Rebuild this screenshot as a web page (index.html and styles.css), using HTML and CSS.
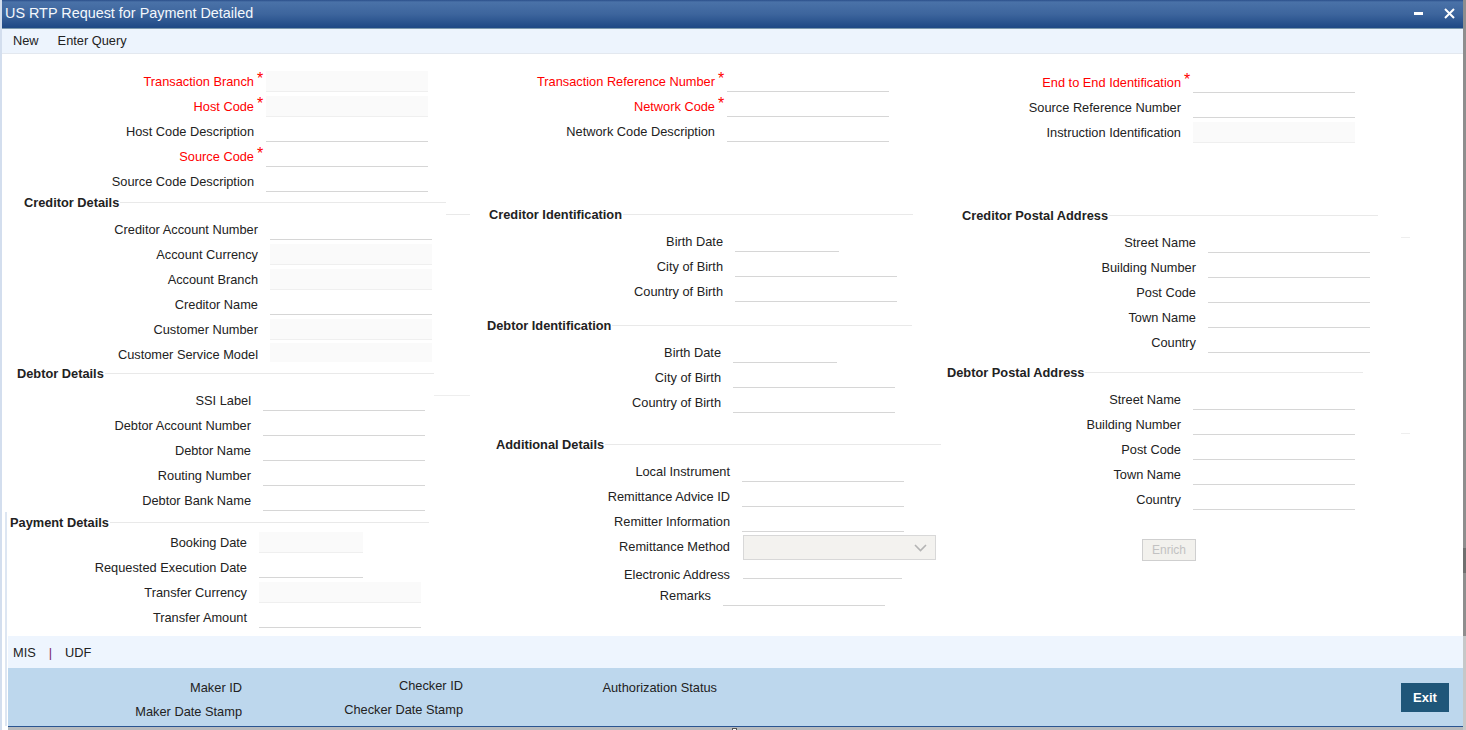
FILE: index.html
```html
<!DOCTYPE html>
<html lang="en">
<head>
<meta charset="utf-8">
<title>US RTP Request for Payment Detailed</title>
<link rel="stylesheet" href="styles.css">
</head>
<body>
<div class="app">
  <div class="edge-left"></div>
  <div class="window">
    <header class="titlebar">
      <h1 class="title">US RTP Request for Payment Detailed</h1>
      <div class="win-ctrl">
        <svg class="ic-min" width="9" height="3" viewBox="0 0 9 3"><rect width="9" height="3" fill="#fff"/></svg>
        <svg class="ic-close" width="11" height="11" viewBox="0 0 11 11"><path d="M1 1l9 9M10 1l-9 9" stroke="#fff" stroke-width="2" fill="none"/></svg>
      </div>
    </header>
    <nav class="menubar"><a>New</a><a>Enter Query</a></nav>

    <main class="form">
      <div class="col col-1">
        <section class="sec s-a">
          <div class="row req"><label class="lab">Transaction Branch</label><span class="star">*</span><input class="inp ro" readonly></div>
          <div class="row req"><label class="lab">Host Code</label><span class="star">*</span><input class="inp ro" readonly></div>
          <div class="row"><label class="lab">Host Code Description</label><span class="star"></span><input class="inp"></div>
          <div class="row req"><label class="lab">Source Code</label><span class="star">*</span><input class="inp"></div>
          <div class="row"><label class="lab">Source Code Description</label><span class="star"></span><input class="inp"></div>
        </section>
        <section class="sec s-cred">
          <h2 class="head h-cred"><span>Creditor Details</span></h2>
          <div class="row"><label class="lab">Creditor Account Number</label><span class="star"></span><input class="inp"></div>
          <div class="row"><label class="lab">Account Currency</label><span class="star"></span><input class="inp ro" readonly></div>
          <div class="row"><label class="lab">Account Branch</label><span class="star"></span><input class="inp ro" readonly></div>
          <div class="row"><label class="lab">Creditor Name</label><span class="star"></span><input class="inp"></div>
          <div class="row"><label class="lab">Customer Number</label><span class="star"></span><input class="inp ro" readonly></div>
          <div class="row"><label class="lab">Customer Service Model</label><span class="star"></span><input class="inp ro clipped" readonly></div>
        </section>
        <section class="sec s-deb">
          <h2 class="head h-deb"><span>Debtor Details</span></h2>
          <div class="row"><label class="lab">SSI Label</label><span class="star"></span><input class="inp"></div>
          <div class="row"><label class="lab">Debtor Account Number</label><span class="star"></span><input class="inp"></div>
          <div class="row"><label class="lab">Debtor Name</label><span class="star"></span><input class="inp"></div>
          <div class="row"><label class="lab">Routing Number</label><span class="star"></span><input class="inp"></div>
          <div class="row"><label class="lab">Debtor Bank Name</label><span class="star"></span><input class="inp"></div>
        </section>
        <section class="sec s-pay">
          <h2 class="head h-pay"><span>Payment Details</span></h2>
          <div class="row"><label class="lab">Booking Date</label><span class="star"></span><input class="inp date ro" readonly></div>
          <div class="row"><label class="lab">Requested Execution Date</label><span class="star"></span><input class="inp date"></div>
          <div class="row"><label class="lab">Transfer Currency</label><span class="star"></span><input class="inp ro" readonly></div>
          <div class="row"><label class="lab">Transfer Amount</label><span class="star"></span><input class="inp"></div>
        </section>
      </div>

      <div class="col col-2">
        <section class="sec s-ref">
          <div class="row req"><label class="lab">Transaction Reference Number</label><span class="star">*</span><input class="inp"></div>
          <div class="row req"><label class="lab">Network Code</label><span class="star">*</span><input class="inp"></div>
          <div class="row"><label class="lab">Network Code Description</label><span class="star"></span><input class="inp"></div>
        </section>
        <section class="sec s-ci">
          <h2 class="head h-ci"><span>Creditor Identification</span></h2>
          <div class="row"><label class="lab">Birth Date</label><span class="star"></span><input class="inp date"></div>
          <div class="row"><label class="lab">City of Birth</label><span class="star"></span><input class="inp"></div>
          <div class="row"><label class="lab">Country of Birth</label><span class="star"></span><input class="inp"></div>
        </section>
        <section class="sec s-di">
          <h2 class="head h-di"><span>Debtor Identification</span></h2>
          <div class="row"><label class="lab">Birth Date</label><span class="star"></span><input class="inp date"></div>
          <div class="row"><label class="lab">City of Birth</label><span class="star"></span><input class="inp"></div>
          <div class="row"><label class="lab">Country of Birth</label><span class="star"></span><input class="inp"></div>
        </section>
        <section class="sec s-add">
          <h2 class="head h-add"><span>Additional Details</span></h2>
          <div class="row"><label class="lab">Local Instrument</label><span class="star"></span><input class="inp"></div>
          <div class="row"><label class="lab">Remittance Advice ID</label><span class="star"></span><input class="inp"></div>
          <div class="row"><label class="lab">Remitter Information</label><span class="star"></span><input class="inp"></div>
          <div class="row row-select"><label class="lab">Remittance Method</label><span class="star"></span>
            <div class="select"><svg width="13" height="8" viewBox="0 0 13 8"><path d="M1 1l5.500 5.500L12 1" stroke="#b4b4b4" stroke-width="1.600" fill="none"/></svg></div>
          </div>
          <div class="row row-email"><label class="lab">Electronic Address</label><span class="star"></span><input class="inp"></div>
          <div class="row row-remarks"><label class="lab">Remarks</label><span class="star"></span><input class="inp"></div>
        </section>
      </div>

      <div class="col col-3">
        <section class="sec s-e2e">
          <div class="row req"><label class="lab">End to End Identification</label><span class="star">*</span><input class="inp"></div>
          <div class="row"><label class="lab">Source Reference Number</label><span class="star"></span><input class="inp"></div>
          <div class="row"><label class="lab">Instruction Identification</label><span class="star"></span><input class="inp ro" readonly></div>
        </section>
        <section class="sec s-cp">
          <h2 class="head h-cp"><span>Creditor Postal Address</span></h2>
          <div class="row"><label class="lab">Street Name</label><span class="star"></span><input class="inp"></div>
          <div class="row"><label class="lab">Building Number</label><span class="star"></span><input class="inp"></div>
          <div class="row"><label class="lab">Post Code</label><span class="star"></span><input class="inp"></div>
          <div class="row"><label class="lab">Town Name</label><span class="star"></span><input class="inp"></div>
          <div class="row"><label class="lab">Country</label><span class="star"></span><input class="inp"></div>
        </section>
        <section class="sec s-dp">
          <h2 class="head h-dp"><span>Debtor Postal Address</span></h2>
          <div class="row"><label class="lab">Street Name</label><span class="star"></span><input class="inp"></div>
          <div class="row"><label class="lab">Building Number</label><span class="star"></span><input class="inp"></div>
          <div class="row"><label class="lab">Post Code</label><span class="star"></span><input class="inp"></div>
          <div class="row"><label class="lab">Town Name</label><span class="star"></span><input class="inp"></div>
          <div class="row"><label class="lab">Country</label><span class="star"></span><input class="inp"></div>
        </section>
        <button class="enrich" disabled>Enrich</button>
      </div>
    </main>

    <div class="tabs"><a>MIS</a><span class="sep">|</span><a>UDF</a></div>
    <footer class="audit">
      <div class="audit-col a-maker"><span>Maker ID</span><span>Maker Date Stamp</span></div>
      <div class="audit-col a-checker"><span>Checker ID</span><span>Checker Date Stamp</span></div>
      <div class="audit-col a-status"><span>Authorization Status</span></div>
      <button class="exit">Exit</button>
    </footer>
    <div class="bottom-edge"></div>
  </div>
  <div class="edge-right"></div>

  <i class="rail"></i>
  <i class="stray st-1"></i>
  <i class="stray st-2"></i>
  <i class="stray st-3"></i>
  <i class="handle"></i>
</div>
</body>
</html>
```
FILE: styles.css
```css
* { box-sizing: border-box; }
html, body { margin: 0; padding: 0; height: 100%; overflow: hidden; }
body { font-family: "Liberation Sans", Arial, sans-serif; font-size: 12.8px; color: #222; background: #fff; }

.app { position: relative; display: flex; width: 1466px; height: 730px; overflow: hidden; }
.edge-left { width: 2px; flex: none; background: #d3deee; }
.edge-right {
  width: 3px; flex: none;
  background: linear-gradient(to bottom, #8e8e8e 0, #8e8e8e 548px, #6f6f6f 548px, #6f6f6f 573px, #8e8e8e 573px, #8e8e8e 636px, #c6c8c8 636px, #c6c8c8 100%);
}
.window { flex: 1; min-width: 0; display: flex; flex-direction: column; background: #fff; }

.titlebar {
  height: 29px; flex: none; display: flex; align-items: center; justify-content: space-between;
  background: linear-gradient(to bottom, #2b4f8a 0, #4a72a8 2px, #3d659d 14px, #204a86 27px, #204a86 28px, #7b98ad 28px);
  padding: 0 8px 3px 3px;
}
.title { margin: 0; font-size: 14.4px; font-weight: 400; color: #f4f8fc; line-height: 16px; }
.win-ctrl { display: flex; align-items: center; gap: 21px; }
.ic-min { margin-top: 1px; }

.menubar {
  height: 25px; flex: none; display: flex; align-items: center; gap: 19px;
  padding: 0 0 2px 11px; background: #edf4fd; border-bottom: 1px solid #e3e8ef;
}
.menubar a { color: #222; }

.form { flex: none; height: 582px; display: flex; overflow: hidden; }
.col { flex: none; }
.col-1 { width: 445px; padding-top: 13px; }
.col-2 { width: 494px; padding-top: 13px; }
.col-3 { width: 522px; padding-top: 14px; }

.row { display: flex; height: 25px; }
.lab { flex: none; width: var(--lw); padding-top: 8px; line-height: 14px; text-align: right; white-space: nowrap; }
.star { flex: none; width: var(--slot, 12px); padding-left: 3px; font-size: 16px; line-height: 23px; color: #f00; }
.req .lab { color: #f00; }
.inp {
  flex: none; display: block; width: 162px; height: 21px; margin: 4px 0 0; padding: 0;
  border: 0; border-bottom: 1px solid #d6d6d6; background: transparent; outline: 0; font: inherit;
}
.inp.ro { background: #fafafa; border-bottom-color: #efefef; }
.inp.date { width: 104px; }
.inp.clipped { height: 19px; margin-top: 3px; border-bottom: 0; }

.head { display: flex; align-items: center; height: 14px; margin: 0; font-size: 12.8px; font-weight: 700; line-height: 14px; color: #222; white-space: nowrap; }
.head span { position: relative; top: 1px; }
.head::after { content: ""; flex: 1; height: 1px; margin-left: 1px; background: #e9e9e9; }

.s-a { --lw: 252px; --slot: 12px; }
.s-cred { --lw: 256px; }
.s-deb { --lw: 249px; }
.s-pay { --lw: 245px; }
.h-cred { margin: 3px 0 6px 22px; width: 422px; }
.h-deb { margin: 1px 0 6px 15px; width: 417px; }
.h-pay { margin: 4px 0 -1px 8px; width: 419px; }

.s-ref { --lw: 268px; }
.s-ci { --lw: 276px; }
.s-di { --lw: 274px; }
.s-add { --lw: 283px; }
.h-ci { margin: 65px 0 6px -1px; width: 467px; }
.h-ci::before { content: ""; width: 24px; height: 1px; margin-right: 19px; background: #e9e9e9; }
.h-di { margin: 16px 0 6px 40px; width: 425px; }
.h-add { margin: 24px 0 6px 49px; width: 445px; }

.row-select { height: 28px; --slot: 13px; }
.select {
  width: 193px; height: 25px; margin-top: 3px; display: flex; align-items: center; justify-content: flex-end;
  padding-right: 8px; background: #f3f2ef; border: 1px solid #d8d8d8;
}
.row-email { height: 19px; --slot: 13px; }
.row-email .inp { width: 159px; height: 19px; margin-top: 0; }
.row-remarks { height: 27px; --lw: 264px; }
.row-remarks .lab { padding-top: 10px; }
.row-remarks .inp { height: 23px; }

.s-e2e { --lw: 240px; }
.s-cp { --lw: 255px; }
.s-dp { --lw: 240px; }
.h-cp { margin: 65px 0 6px 21px; width: 416px; }
.h-dp { margin: 12px 0 6px 6px; width: 416px; }

.enrich {
  display: block; width: 54px; height: 22px; margin: 29px 0 0 201px; padding: 0;
  background: #f2f1ed; border: 1px solid #cfcfcf; color: #c2c2c2; font: 12px "Liberation Sans", Arial, sans-serif;
}

.tabs {
  flex: none; height: 32px; margin-left: 6px; display: flex; align-items: center; gap: 10px; padding-left: 5px;
  background: #eef5fe;
}
.tabs .sep { color: #7a1f6a; margin: 0 3px; }

.audit { flex: none; height: 58px; margin-left: 6px; display: flex; background: #bdd7ed; padding-top: 13px; }
.audit-col { display: flex; flex-direction: column; gap: 10px; text-align: right; line-height: 14px; white-space: nowrap; }
.a-maker { width: 234px; }
.a-checker { width: 221px; margin-top: -2px; }
.a-status { width: 254px; }
.exit {
  width: 48px; height: 29px; margin: 2px 14px 0 auto; padding: 0; border: 0;
  background: #1f5679; color: #fff; font: 700 13px "Liberation Sans", Arial, sans-serif;
}
.bottom-edge { flex: 1; margin-left: 6px; border-top: 1px solid #2a5592; background: #b6babe; }

.rail { position: absolute; left: 5px; top: 512px; width: 2px; height: 214px; background: #dde6f2; }
.stray { position: absolute; height: 1px; background: #eeeeee; }
.st-1 { left: 434px; top: 395px; width: 36px; }
.st-2 { left: 1401px; top: 237px; width: 9px; }
.st-3 { left: 1401px; top: 433px; width: 9px; }
.handle { position: absolute; left: 732px; top: 728px; width: 5px; height: 4px; background: #fff; border: 1px solid #555; }
```
